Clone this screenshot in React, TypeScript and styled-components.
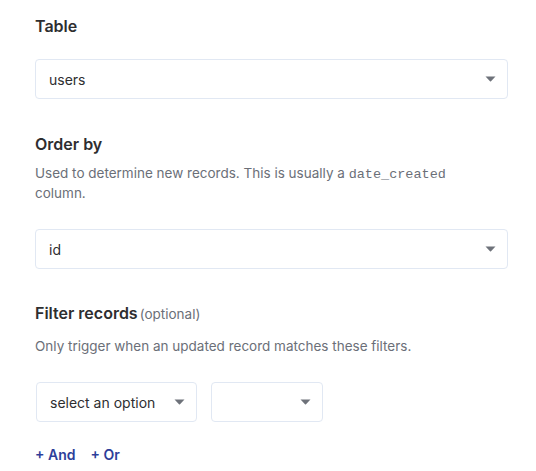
import React from 'react';
import styled, { createGlobalStyle } from 'styled-components';

const GlobalStyle = createGlobalStyle`
    html, body {
        margin: 0;
        padding: 0;
        background: #ffffff;
    }
    body {
        font-family: Inter, "Noto Sans", sans-serif;
        -webkit-font-smoothing: antialiased;
    }
`;

const Page = styled.div`
    display: flex;
    flex-direction: column;
    padding: 16px 28px 0 35px;
`;

const Section = styled.div<{ $gap: number }>`
    display: flex;
    flex-direction: column;
    margin-top: ${(p) => p.$gap}px;
`;

const Label = styled.div`
    font-size: 16px;
    line-height: 20px;
    font-weight: 600;
    color: #2e2e30;
    display: flex;
    align-items: baseline;
    gap: 2px;
`;

const Optional = styled.span`
    font-size: 13.5px;
    font-weight: 400;
    color: #6b6f78;
`;

const Help = styled.div<{ $gap: number }>`
    margin-top: ${(p) => p.$gap}px;
    max-width: 430px;
    font-size: 13.5px;
    line-height: 18px;
    color: #6b6f78;
`;

const Code = styled.code`
    font-family: "Liberation Mono", "DejaVu Sans Mono", monospace;
    font-size: 13.5px;
    color: #6b6f78;
`;

const SelectBox = styled.div<{ $gap: number; $width?: number }>`
    box-sizing: border-box;
    margin-top: ${(p) => p.$gap}px;
    height: 40px;
    width: ${(p) => (p.$width ? `${p.$width}px` : '100%')};
    display: flex;
    align-items: center;
    justify-content: space-between;
    padding: 0 11px 0 13px;
    border: 1px solid #e1e8f3;
    border-radius: 4px;
    background: #ffffff;
    font-size: 14px;
    color: #2e2e30;
`;

const FilterRow = styled.div`
    display: flex;
    gap: 14px;
    margin-top: 27px;
    padding-left: 1px;
    & > ${SelectBox} {
        margin-top: 0;
    }
`;

const Links = styled.div`
    display: flex;
    gap: 15px;
    margin-top: 24px;
`;

const LinkButton = styled.button`
    border: none;
    background: none;
    padding: 0;
    font-family: inherit;
    font-size: 14px;
    line-height: 18px;
    font-weight: 600;
    color: #2d3e9a;
    cursor: pointer;
`;

const Caret = () => (
    <svg width="11" height="6" viewBox="0 0 11 6">
        <path d="M0.5 0.5 H10.5 L6 5.3 Q5.5 5.8 5 5.3 Z" fill="#6e727a" />
    </svg>
);

interface ISelectProps {
    value?: string;
    gap?: number;
    width?: number;
}
const Select: React.FunctionComponent<ISelectProps> = ({ value, gap = 0, width }) => (
    <SelectBox $gap={gap} $width={width}>
        <span>{value}</span>
        <Caret />
    </SelectBox>
);

const App: React.FunctionComponent = () => (
    <>
        <GlobalStyle />
        <Page>
            <Section $gap={0}>
                <Label>Table</Label>
                <Select value="users" gap={23} />
            </Section>
            <Section $gap={35}>
                <Label>Order by</Label>
                <Help $gap={10}>
                    Used to determine new records. This is usually a <Code>date_created</Code> column.
                </Help>
                <Select value="id" gap={27} />
            </Section>
            <Section $gap={34}>
                <Label>
                    Filter records<Optional>(optional)</Optional>
                </Label>
                <Help $gap={13}>Only trigger when an updated record matches these filters.</Help>
                <FilterRow>
                    <Select value="select an option" width={161} />
                    <Select width={112} />
                </FilterRow>
                <Links>
                    <LinkButton>+ And</LinkButton>
                    <LinkButton>+ Or</LinkButton>
                </Links>
            </Section>
        </Page>
    </>
);

export default App;
